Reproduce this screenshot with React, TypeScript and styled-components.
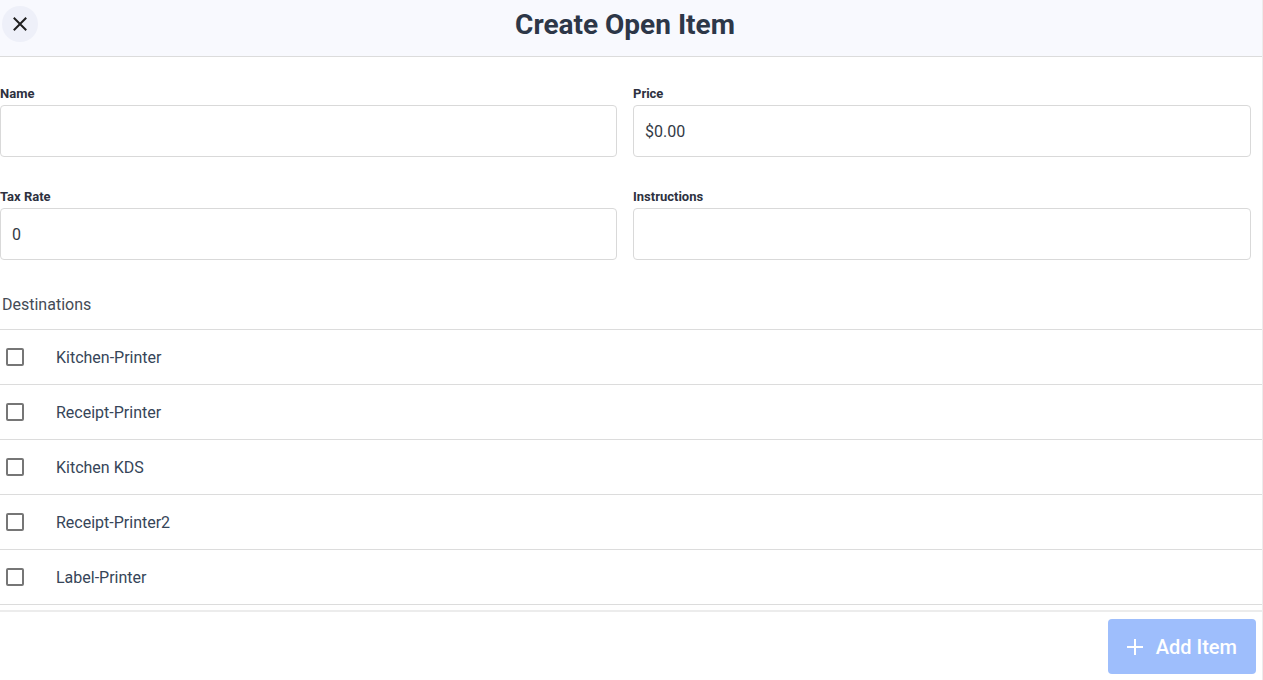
import React from "react";
import styled, { createGlobalStyle } from "styled-components";

const GlobalStyle = createGlobalStyle`
  html, body {
    margin: 0;
    padding: 0;
    background: #ffffff;
    font-family: Roboto, "Liberation Sans", Arial, sans-serif;
  }
  * {
    box-sizing: border-box;
  }
`;

const Page = styled.div`
  display: flex;
  flex-direction: column;
  height: 100vh;
  width: 100%;
  border-right: 1px solid #ececec;
`;

const Header = styled.div`
  display: flex;
  align-items: center;
  height: 57px;
  flex-shrink: 0;
  padding: 0 0 1px 2px;
  background-color: #f8f9fe;
  border-bottom: 1px solid #dcdcdc;
`;

const CloseButton = styled.button`
  display: flex;
  align-items: center;
  justify-content: center;
  width: 36px;
  height: 36px;
  margin-top: -8px;
  padding: 0;
  border: none;
  border-radius: 50%;
  background-color: #eef0f9;
  color: #1f1f1f;
  cursor: pointer;
`;

const Title = styled.h1`
  flex: 1;
  margin: -7px 0 0;
  padding-right: 50px;
  text-align: center;
  font-size: 28px;
  font-weight: 700;
  color: #2d3748;
`;

const Body = styled.div`
  flex: 1;
  overflow: hidden;
  padding-top: 29px;
`;

const FieldGrid = styled.div`
  display: grid;
  grid-template-columns: 617px 618px;
  column-gap: 16px;
  row-gap: 32px;
`;

const Field = styled.div`
  display: flex;
  flex-direction: column;
  gap: 3px;
`;

const Label = styled.label`
  font-size: 13px;
  line-height: 16px;
  font-weight: 700;
  color: #2d3140;
`;

const Input = styled.input`
  height: 52px;
  padding: 0 10px 0 11px;
  border: 1px solid #d9d9d9;
  border-radius: 4px;
  outline: none;
  font-family: inherit;
  font-size: 16px;
  color: #333a45;
  background: #fff;
`;

const SectionTitle = styled.div`
  margin: 33px 0 12px 2px;
  font-size: 16px;
  line-height: 24px;
  color: #444b55;
`;

const List = styled.div`
  border-top: 1px solid #dcdcdc;
`;

const Row = styled.label`
  display: flex;
  align-items: center;
  height: 55px;
  padding-left: 6px;
  border-bottom: 1px solid #dcdcdc;
  font-size: 16px;
  color: #364558;
  cursor: pointer;
`;

const Box = styled.span`
  width: 18px;
  height: 18px;
  margin-right: 32px;
  border: 2px solid #767676;
  border-radius: 2px;
  flex-shrink: 0;
`;

const Footer = styled.div`
  display: flex;
  justify-content: flex-end;
  align-items: flex-start;
  height: 70px;
  flex-shrink: 0;
  padding: 7px 6px 0 0;
  border-top: 2px solid #ececec;
`;

const AddButton = styled.button`
  display: flex;
  align-items: center;
  gap: 11px;
  height: 55px;
  padding: 0 19px 0 17px;
  border: none;
  border-radius: 4px;
  background-color: #9ebefc;
  color: #ffffff;
  font-family: inherit;
  font-size: 20px;
  font-weight: 500;
  cursor: default;
`;

const destinations = [
  "Kitchen-Printer",
  "Receipt-Printer",
  "Kitchen KDS",
  "Receipt-Printer2",
  "Label-Printer",
];

export default function App() {
  return (
    <>
      <GlobalStyle />
      <Page>
        <Header>
          <CloseButton aria-label="Close">
            <svg width="14" height="14" viewBox="0 0 14 14" fill="none">
              <path
                d="M1.5 1.5L12.5 12.5M12.5 1.5L1.5 12.5"
                stroke="currentColor"
                strokeWidth="2"
                strokeLinecap="square"
              />
            </svg>
          </CloseButton>
          <Title>Create Open Item</Title>
        </Header>
        <Body>
          <FieldGrid>
            <Field>
              <Label>Name</Label>
              <Input type="text" />
            </Field>
            <Field>
              <Label>Price</Label>
              <Input type="text" defaultValue="$0.00" />
            </Field>
            <Field>
              <Label>Tax Rate</Label>
              <Input type="text" defaultValue="0" />
            </Field>
            <Field>
              <Label>Instructions</Label>
              <Input type="text" />
            </Field>
          </FieldGrid>
          <SectionTitle>Destinations</SectionTitle>
          <List>
            {destinations.map((d) => (
              <Row key={d}>
                <Box />
                {d}
              </Row>
            ))}
          </List>
        </Body>
        <Footer>
          <AddButton>
            <svg width="20" height="20" viewBox="0 0 20 20" fill="none">
              <path
                d="M10 2V18M2 10H18"
                stroke="currentColor"
                strokeWidth="2"
              />
            </svg>
            Add Item
          </AddButton>
        </Footer>
      </Page>
    </>
  );
}
